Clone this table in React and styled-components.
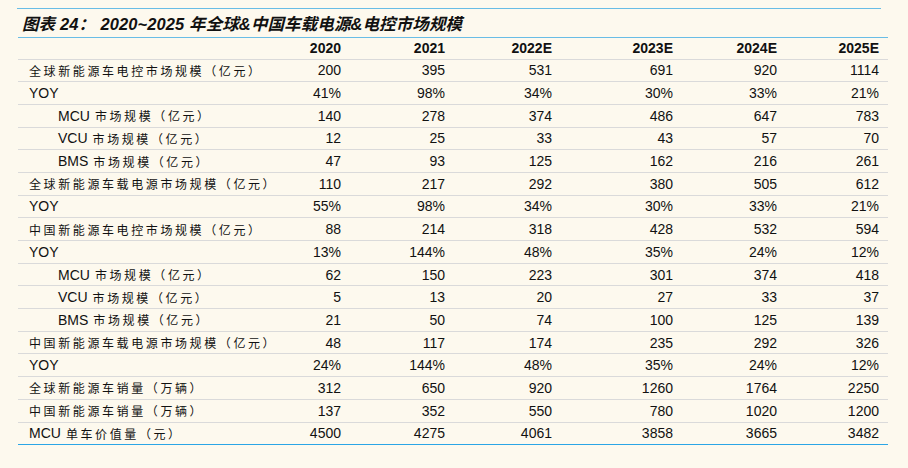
import styled, { createGlobalStyle } from 'styled-components';

const GlobalStyle = createGlobalStyle`
  body {
    margin: 0;
    background: #fdf9ee;
    font-family: "Liberation Sans", "Noto Sans CJK SC", sans-serif;
    color: #111;
  }
`;

const Page = styled.div`
  padding-top: 8px;
`;

const Title = styled.h1`
  box-sizing: border-box;
  margin: 0 0 0 17px;
  width: 864px;
  height: 28.5px;
  border-top: 1.5px solid #69bde6;
  padding-left: 5px;
  display: flex;
  align-items: center;
  font-size: 16.5px;
  font-weight: bold;
  font-style: italic;
  letter-spacing: 0.1px;
  font-family: "Liberation Sans", "Noto Sans CJK SC", sans-serif;
  white-space: pre;
`;

const Colon = styled.span`
  display: inline-block;
  width: 22px;
`;

const Table = styled.div`
  margin-left: 18px;
  width: 870px;
  border-top: 1.5px solid #69bde6;
`;

const Row = styled.div`
  box-sizing: border-box;
  display: grid;
  grid-template-columns: 230px 102px 104px 107px 121px 104px 102px;
  align-items: center;
  height: ${({ $head }) => ($head ? '22px' : '22.7px')};
  border-bottom: ${({ $last }) => ($last ? '1.5px solid #2ba6e6' : '1px solid #dadada')};
  font-size: 14px;
  font-weight: ${({ $head }) => ($head ? 'bold' : 'normal')};
`;

const Label = styled.div`
  padding-left: ${({ $indent }) => ($indent ? '40px' : '11px')};
  white-space: nowrap;
  display: flex;
  align-items: center;
`;

const Cjk = styled.span`
  font-family: "Noto Sans CJK SC", sans-serif;
  font-size: 12px;
  letter-spacing: 2.6px;
  margin-left: ${({ $gap }) => ($gap ? '5px' : '0')};
`;

const Cell = styled.div`
  text-align: right;
  padding-right: 9px;
`;

const years = ['2020', '2021', '2022E', '2023E', '2024E', '2025E'];

const rows = [
  { pre: '', cn: '全球新能源车电控市场规模（亿元）', v: [200, 395, 531, 691, 920, 1114] },
  { pre: 'YOY', cn: '', v: ['41%', '98%', '34%', '30%', '33%', '21%'] },
  { pre: 'MCU', cn: '市场规模（亿元）', indent: true, v: [140, 278, 374, 486, 647, 783] },
  { pre: 'VCU', cn: '市场规模（亿元）', indent: true, v: [12, 25, 33, 43, 57, 70] },
  { pre: 'BMS', cn: '市场规模（亿元）', indent: true, v: [47, 93, 125, 162, 216, 261] },
  { pre: '', cn: '全球新能源车载电源市场规模（亿元）', v: [110, 217, 292, 380, 505, 612] },
  { pre: 'YOY', cn: '', v: ['55%', '98%', '34%', '30%', '33%', '21%'] },
  { pre: '', cn: '中国新能源车电控市场规模（亿元）', v: [88, 214, 318, 428, 532, 594] },
  { pre: 'YOY', cn: '', v: ['13%', '144%', '48%', '35%', '24%', '12%'] },
  { pre: 'MCU', cn: '市场规模（亿元）', indent: true, v: [62, 150, 223, 301, 374, 418] },
  { pre: 'VCU', cn: '市场规模（亿元）', indent: true, v: [5, 13, 20, 27, 33, 37] },
  { pre: 'BMS', cn: '市场规模（亿元）', indent: true, v: [21, 50, 74, 100, 125, 139] },
  { pre: '', cn: '中国新能源车载电源市场规模（亿元）', v: [48, 117, 174, 235, 292, 326] },
  { pre: 'YOY', cn: '', v: ['24%', '144%', '48%', '35%', '24%', '12%'] },
  { pre: '', cn: '全球新能源车销量（万辆）', v: [312, 650, 920, 1260, 1764, 2250] },
  { pre: '', cn: '中国新能源车销量（万辆）', v: [137, 352, 550, 780, 1020, 1200] },
  { pre: 'MCU', cn: '单车价值量（元）', v: [4500, 4275, 4061, 3858, 3665, 3482] },
];

export default function App() {
  return (
    <Page>
      <GlobalStyle />
      <Title>
        图表 24<Colon>：</Colon>2020~2025 年全球&中国车载电源&电控市场规模
      </Title>
      <Table>
        <Row $head>
          <Label />
          {years.map((y) => (
            <Cell key={y}>{y}</Cell>
          ))}
        </Row>
        {rows.map((r, i) => (
          <Row key={i} $last={i === rows.length - 1}>
            <Label $indent={r.indent}>
              {r.pre}
              {r.cn && <Cjk $gap={!!r.pre}>{r.cn}</Cjk>}
            </Label>
            {r.v.map((v, j) => (
              <Cell key={j}>{v}</Cell>
            ))}
          </Row>
        ))}
      </Table>
    </Page>
  );
}
